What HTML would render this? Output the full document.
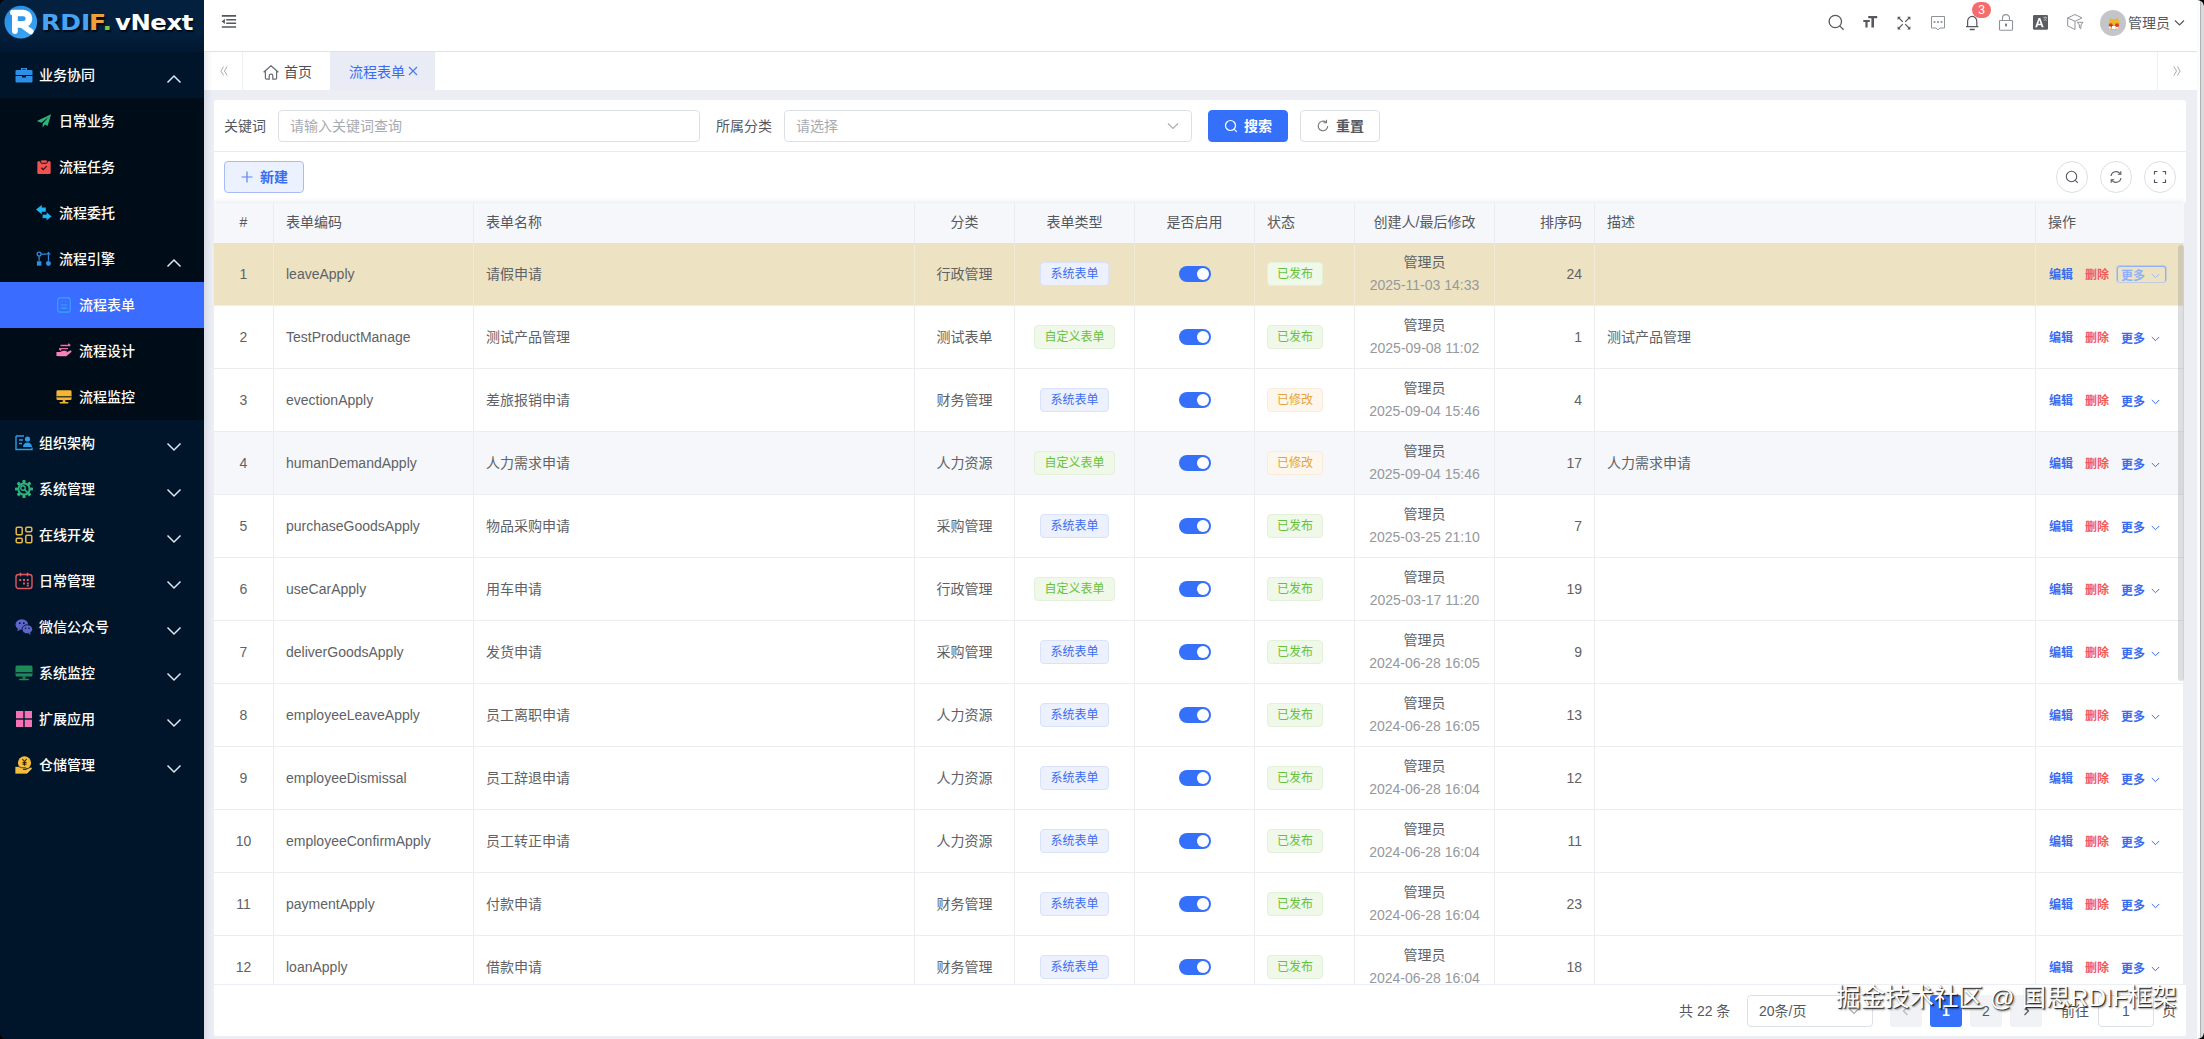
<!DOCTYPE html>
<html lang="zh-CN">
<head>
<meta charset="utf-8">
<title>流程表单</title>
<style>
*{box-sizing:border-box;margin:0;padding:0}
html,body{width:2204px;height:1039px;overflow:hidden;background:#eceef4;
  font-family:"Liberation Sans","Noto Sans CJK SC",sans-serif;font-size:14px;color:#606266}
body{position:relative}
svg{display:block;overflow:visible}
.abs{position:absolute}
/* ---------- sidebar ---------- */
#side{position:absolute;left:0;top:0;width:204px;height:1039px;background:#001529;color:#fff;overflow:hidden}
#logo{position:absolute;left:0;top:0;width:204px;height:52px;background:linear-gradient(180deg,#03213f 0,#03203e 62%,#021a34 88%,#011830 100%)}
#logo .lt{position:absolute;top:10px;font-family:"DejaVu Sans","Liberation Sans",sans-serif;font-size:21px;font-weight:700;line-height:26px;white-space:nowrap;transform:scaleX(1.19);transform-origin:0 0;text-shadow:1px 1.5px 1.5px rgba(0,0,0,.75)}
#subbg{position:absolute;left:0;top:98px;width:204px;height:322px;background:#000c17}
.mi{position:absolute;left:0;width:204px;height:46px;line-height:46px;font-size:14px;font-weight:500;color:#fff;white-space:nowrap}
.mi .ic{position:absolute;top:14px;width:18px;height:18px}
.mi .tx{position:absolute;top:0}
.mi .ar{position:absolute;left:166px;top:22px;width:16px;height:10px}
.act{background:#3a6cff}
/* ---------- header ---------- */
#head{position:absolute;left:204px;top:0;width:1992px;height:52px;background:#fff;border-bottom:1px solid #dfe2e8}
#head .hi{position:absolute;top:13px;width:18px;height:18px}
#tabs{position:absolute;left:204px;top:52px;width:1992px;height:38px;background:#fff}
.tab{position:absolute;top:0;height:38px;line-height:40px;font-size:14px;color:#4c4f54;white-space:nowrap}
/* ---------- card ---------- */
#card{position:absolute;left:214px;top:100px;width:1972px;height:936px;background:#fff;border-radius:3px;overflow:hidden}
.lbl{position:absolute;top:10px;height:32px;line-height:32px;font-size:14px;color:#55585e}
.inp{position:absolute;top:10px;height:32px;line-height:30px;border:1px solid #dcdfe6;border-radius:4px;background:#fff;font-size:14px;color:#a8abb2;padding-left:11px}
.btn{position:absolute;height:32px;line-height:30px;border-radius:4px;font-size:14px;font-weight:700;text-align:center;white-space:nowrap}
.cbtn{position:absolute;top:61px;width:32px;height:32px;border:1px solid #dcdfe6;border-radius:50%;background:#fff}
.cbtn svg{position:absolute;left:8px;top:8px;width:14px;height:14px}
/* table */
#th{position:absolute;left:0;top:103px;width:1970px;height:40px;background:#f5f7fa;box-shadow:0 -2px 4px rgba(200,205,220,.35)}
.hc{position:absolute;top:0;height:40px;line-height:39px;border-right:1px solid #e9ecf2;color:#55585e;font-size:14px;padding:0 12px;white-space:nowrap}
.row{position:absolute;left:0;width:1970px;height:63px;border-bottom:1px solid #ebedf1;background:#fff}
.row.hl{background:#ede3c2}
.row.st{background:#f5f7fa}
.c{position:absolute;top:0;height:63px;line-height:62px;border-right:1px solid #ebedf1;padding:0 12px;white-space:nowrap;color:#606266;font-size:14px}
.row.hl .c{border-right-color:#f1ead7}
.ctr{text-align:center}
.rgt{text-align:right}
.tag{display:inline-block;height:24px;line-height:22px;padding:0 9px;font-size:12px;border-radius:4px;border:1px solid;vertical-align:middle;position:relative;top:-1px}
.tb{color:#3a6cf0;background:#ecf1fd;border-color:#d8e2fb}
.tg{color:#67c23a;background:#eff8e9;border-color:#e2f2d9}
.to{color:#e6a23c;background:#fdf6ec;border-color:#faecd8}
.sw{position:absolute;left:44px;top:23px;width:32px;height:16px;border-radius:8px;background:#3570fa}
.sw i{position:absolute;right:2px;top:2px;width:12px;height:12px;border-radius:50%;background:#fff}
.two{line-height:23px;padding-top:8px}
.two span{display:block}
.two .d{color:#96989c}
.op{position:absolute;top:1px;font-size:12px;font-weight:700;line-height:63px}
.op.mo{top:2px}
.ob{color:#3a6cf0}
.or{color:#f05b5b}
/* pagination */
#pg{position:absolute;left:0;top:884px;width:1972px;height:52px;background:#fff;border-top:1px solid #ebeef5}
.pb{position:absolute;top:10px;width:32px;height:32px;line-height:32px;border-radius:3px;background:#f0f2f5;text-align:center;color:#55585e;font-size:14px}
/* right edge strip */
#edge{position:absolute;left:2197px;top:0;width:7px;height:1039px;background:linear-gradient(90deg,#fafbfb 0,#fcfdfd 3px,#b0b1b4 3px,#b4b5b8 4px,#d4d5d7 4.5px,#dadbdd 5px)}
#head,#tabs{width:1993px}
#wm{position:absolute;left:1836px;top:981px;font-size:24.5px;line-height:34px;color:#fff;white-space:nowrap;text-shadow:1px 1px 1px rgba(0,0,0,.85),2px 2px 2px rgba(0,0,0,.35);letter-spacing:0}
</style>
</head>
<body>
<div id="side">
<div id="logo"><svg class="abs" style="left:0;top:0;width:42px;height:44px" viewBox="0 0 42 44"><defs><linearGradient id="lg" x1="0" y1="0" x2=".6" y2="1"><stop offset="0" stop-color="#2389de"/><stop offset="1" stop-color="#3aa3f3"/></linearGradient></defs><circle cx="20.8" cy="22.1" r="16.3" fill="url(#lg)"/><g fill="none" stroke="#fff" stroke-linecap="round" stroke-linejoin="round"><path d="M14.9 12.7V31" stroke-width="5.8"/><path d="M15 13H23.3A5.7 5.7 0 0 1 23.3 24.4H18" stroke-width="6.6"/><path d="M21 24.5L30.8 31.6" stroke-width="5.5"/></g><circle cx="12.9" cy="12.6" r="2.9" fill="#fff"/></svg><div class="lt" style="left:40.5px;letter-spacing:0"><span style="color:#47a3f3">RDI</span><span style="color:#eda03c;margin-left:-1px">F</span><span style="color:#7ac943">.</span></div><div class="lt" style="left:114.5px;color:#fff;letter-spacing:-.4px;transform:scaleX(1.16)">vNext</div></div>
<div id="subbg"></div>
<div class="mi" style="top:52px"><svg class="ic" style="left:15px" viewBox="0 0 18 18"><path d="M6 2h6v2h4.5a1 1 0 0 1 1 1v4H.5V5a1 1 0 0 1 1-1H6zM7.5 3.3V4h3v-.7z" fill="#2e8fe6"/><path d="M.5 10h6.5v1.5h4V10h6.5v5.5a1 1 0 0 1-1 1h-15a1 1 0 0 1-1-1z" fill="#2e8fe6"/></svg><span class="tx" style="left:39px">业务协同</span><svg class="ar" viewBox="0 0 16 10"><path d="M1.5 8.5 L8 2 L14.5 8.5" fill="none" stroke="#dfe6f0" stroke-width="1.5"/></svg></div>
<div class="mi" style="top:98px"><svg class="ic" style="left:36px;top:15px;width:16px;height:16px" viewBox="0 0 18 18"><path d="M17 1.5 L1 9 L6 11 L14 4.5 L7.5 12 L7.5 16.5 L10 13 L13 14.5 Z" fill="#2fb37d"/></svg><span class="tx" style="left:59px">日常业务</span></div>
<div class="mi" style="top:144px"><svg class="ic" style="left:36px;top:15px;width:16px;height:16px" viewBox="0 0 18 18"><rect x="1.5" y="2.5" width="15" height="14.5" rx="1.5" fill="#f0524f"/><rect x="5.3" y="1" width="7.4" height="3.8" rx="1" fill="#f0524f" stroke="#000c17" stroke-width="1"/><path d="M6 9.8l2.2 2.2 3.8-4" fill="none" stroke="#3a1020" stroke-width="1.5"/></svg><span class="tx" style="left:59px">流程任务</span></div>
<div class="mi" style="top:190px"><svg class="ic" style="left:36px;top:15px;width:16px;height:16px" viewBox="0 0 18 18"><path d="M6.5 0 L0 5.2 L6.5 10.4 V7.6 H11 V2.8 H6.5Z" fill="#1fb3f5"/><path d="M11.5 7.6 L18 12.8 L11.5 18 V15.2 H7 V10.4 H11.5Z" fill="#1fb3f5" stroke="#000c17" stroke-width=".8"/></svg><span class="tx" style="left:59px">流程委托</span></div>
<div class="mi" style="top:236px"><svg class="ic" style="left:36px;top:15px;width:16px;height:16px" viewBox="0 0 18 18"><circle cx="3.5" cy="3.5" r="2.2" fill="none" stroke="#2e8fe6" stroke-width="1.4"/><path d="M6 3.5h5.5" stroke="#2e8fe6" stroke-width="1.4"/><path d="M14 .8l2.8 3.2h-5.6z" fill="#2e8fe6"/><path d="M14 4v7M3.5 6v5" stroke="#2e8fe6" stroke-width="1.4"/><rect x="1" y="11.5" width="5" height="5" fill="#2e8fe6"/><circle cx="14" cy="14" r="2.8" fill="#2e8fe6"/></svg><span class="tx" style="left:59px">流程引擎</span><svg class="ar" viewBox="0 0 16 10"><path d="M1.5 8.5 L8 2 L14.5 8.5" fill="none" stroke="#dfe6f0" stroke-width="1.5"/></svg></div>
<div class="mi act" style="top:282px"><svg class="ic" style="left:56px;top:15px;width:16px;height:16px" viewBox="0 0 18 18"><rect x="2" y="1" width="14" height="16" rx="2" fill="none" stroke="#35a7f5" stroke-width="1.2"/><path d="M5.5 9h7M5.5 12.5h7" stroke="#35a7f5" stroke-width="1.2"/><path d="M6.5 5h1M10.5 5h1" stroke="#35a7f5" stroke-width="1.2"/></svg><span class="tx" style="left:79px">流程表单</span></div>
<div class="mi" style="top:328px"><svg class="ic" style="left:56px;top:15px;width:16px;height:16px" viewBox="0 0 18 18"><path d="M5 2.8h11M16 2.8l-2.2-2M13.5 6.3H3.5M3.5 6.3l2.2 2" stroke="#f06aa8" stroke-width="1.6" fill="none"/><path d="M.5 10h4l3.2-1.2h3.6c1.1 0 1.1 1.7 0 1.7h-2.5 3.2l4-2c1.2-.5 2 1 1 1.8l-5.5 4.7H4.5L.5 14.5z" fill="#f684bb"/></svg><span class="tx" style="left:79px">流程设计</span></div>
<div class="mi" style="top:374px"><svg class="ic" style="left:56px;top:15px;width:16px;height:16px" viewBox="0 0 18 18"><rect x=".5" y="1.5" width="17" height="11" rx="1.5" fill="#f2b632"/><rect x=".5" y="8.2" width="17" height="1.2" fill="#000c17"/><rect x="7.5" y="12.5" width="3" height="2.2" fill="#f2b632"/><rect x="4" y="14.7" width="10" height="1.6" rx=".8" fill="#f2b632"/></svg><span class="tx" style="left:79px">流程监控</span></div>
<div class="mi" style="top:420px"><svg class="ic" style="left:15px" viewBox="0 0 18 18"><path d="M1 2h8M1 2v13.5h16v-2" fill="none" stroke="#2e9be6" stroke-width="1.4"/><path d="M4 6h4M4 9.5h3" stroke="#2e9be6" stroke-width="1.4"/><circle cx="12.5" cy="5" r="2.6" fill="#2e9be6"/><path d="M8 13c0-3 2-4.5 4.5-4.5s4.5 1.5 4.5 4.5z" fill="#2e9be6"/></svg><span class="tx" style="left:39px">组织架构</span><svg class="ar" viewBox="0 0 16 10"><path d="M1.5 1.5 L8 8 L14.5 1.5" fill="none" stroke="#dfe6f0" stroke-width="1.5"/></svg></div>
<div class="mi" style="top:466px"><svg class="ic" style="left:15px" viewBox="0 0 18 18"><g transform="translate(9 9)"><circle r="5.6" fill="none" stroke="#2fb37d" stroke-width="2"/><g fill="#2fb37d"><rect x="-1.6" y="-9" width="3.2" height="3" rx=".8"/><rect x="-1.6" y="6" width="3.2" height="3" rx=".8"/><rect x="-9" y="-1.6" width="3" height="3.2" rx=".8"/><rect x="6" y="-1.6" width="3" height="3.2" rx=".8"/><g transform="rotate(45)"><rect x="-1.6" y="-9" width="3.2" height="3" rx=".8"/><rect x="-1.6" y="6" width="3.2" height="3" rx=".8"/><rect x="-9" y="-1.6" width="3" height="3.2" rx=".8"/><rect x="6" y="-1.6" width="3" height="3.2" rx=".8"/></g></g><circle cx="-1" cy="-1" r="2.2" fill="none" stroke="#2fb37d" stroke-width="1.4"/><path d="M.5 .5L4.8 4.8" stroke="#2fb37d" stroke-width="1.7"/></g></svg><span class="tx" style="left:39px">系统管理</span><svg class="ar" viewBox="0 0 16 10"><path d="M1.5 1.5 L8 8 L14.5 1.5" fill="none" stroke="#dfe6f0" stroke-width="1.5"/></svg></div>
<div class="mi" style="top:512px"><svg class="ic" style="left:15px" viewBox="0 0 18 18"><g fill="none" stroke="#e7b84a" stroke-width="1.5"><rect x="1.2" y="1.2" width="6" height="7.5" rx="1.2"/><rect x="10.8" y="1.2" width="6" height="4.5" rx="1.2"/><rect x="1.2" y="12.3" width="6" height="4.5" rx="1.2"/><rect x="10.8" y="9.3" width="6" height="7.5" rx="1.2"/></g></svg><span class="tx" style="left:39px">在线开发</span><svg class="ar" viewBox="0 0 16 10"><path d="M1.5 1.5 L8 8 L14.5 1.5" fill="none" stroke="#dfe6f0" stroke-width="1.5"/></svg></div>
<div class="mi" style="top:558px"><svg class="ic" style="left:15px" viewBox="0 0 18 18"><rect x="1" y="2.5" width="16" height="14" rx="2.5" fill="none" stroke="#e2585c" stroke-width="1.4"/><path d="M5.5 .8v3.5M12.5 .8v3.5" stroke="#e2585c" stroke-width="1.6"/><g fill="#e2585c"><rect x="4.2" y="7" width="2" height="2"/><rect x="8" y="7" width="2" height="2"/><rect x="11.8" y="7" width="2" height="2"/><rect x="8" y="10.5" width="2" height="2"/><rect x="11.8" y="10.5" width="2" height="2"/><rect x="11.8" y="13" width="2" height="1.5"/></g></svg><span class="tx" style="left:39px">日常管理</span><svg class="ar" viewBox="0 0 16 10"><path d="M1.5 1.5 L8 8 L14.5 1.5" fill="none" stroke="#dfe6f0" stroke-width="1.5"/></svg></div>
<div class="mi" style="top:604px"><svg class="ic" style="left:15px" viewBox="0 0 18 18"><ellipse cx="6.8" cy="6.5" rx="6.3" ry="5.3" fill="#5f66c9"/><path d="M3 10.5l-.8 2.8 3-1.5z" fill="#5f66c9"/><ellipse cx="12.3" cy="11.3" rx="5.3" ry="4.5" fill="#5f66c9" stroke="#001529" stroke-width=".9"/><path d="M15 14.8l.8 2-2.5-1z" fill="#5f66c9"/><circle cx="4.8" cy="5.2" r=".9" fill="#001529"/><circle cx="8.8" cy="5.2" r=".9" fill="#001529"/><circle cx="10.6" cy="10.3" r=".8" fill="#001529"/><circle cx="14" cy="10.3" r=".8" fill="#001529"/></svg><span class="tx" style="left:39px">微信公众号</span><svg class="ar" viewBox="0 0 16 10"><path d="M1.5 1.5 L8 8 L14.5 1.5" fill="none" stroke="#dfe6f0" stroke-width="1.5"/></svg></div>
<div class="mi" style="top:650px"><svg class="ic" style="left:15px" viewBox="0 0 18 18"><rect x=".5" y="1.5" width="17" height="11" rx="1.5" fill="#1e8a5a"/><rect x=".5" y="8.2" width="17" height="1.2" fill="#001529"/><rect x="7.5" y="12.5" width="3" height="2.2" fill="#1e8a5a"/><rect x="4" y="14.7" width="10" height="1.6" rx=".8" fill="#1e8a5a"/></svg><span class="tx" style="left:39px">系统监控</span><svg class="ar" viewBox="0 0 16 10"><path d="M1.5 1.5 L8 8 L14.5 1.5" fill="none" stroke="#dfe6f0" stroke-width="1.5"/></svg></div>
<div class="mi" style="top:696px"><svg class="ic" style="left:15px" viewBox="0 0 18 18"><g fill="#f472b6"><rect x="1" y="1" width="7.3" height="7.3"/><rect x="9.7" y="1" width="7.3" height="7.3"/><rect x="1" y="9.7" width="7.3" height="7.3"/><rect x="9.7" y="9.7" width="7.3" height="7.3"/></g></svg><span class="tx" style="left:39px">扩展应用</span><svg class="ar" viewBox="0 0 16 10"><path d="M1.5 1.5 L8 8 L14.5 1.5" fill="none" stroke="#dfe6f0" stroke-width="1.5"/></svg></div>
<div class="mi" style="top:742px"><svg class="ic" style="left:15px" viewBox="0 0 18 18"><circle cx="9.5" cy="6.8" r="6.6" fill="#f5bd3d"/><path d="M0 10.5h3.5l3 1.2h4c1.2 0 1.2 1.6 0 1.6H8h3l4.5-2c1.2-.5 2.3.9 1.3 1.9L12 18H0z" fill="#f5bd3d" stroke="#001529" stroke-width=".7"/><path d="M7.3 3l2.2 2.6L11.7 3M9.5 5.6v4.2M7.5 6.6h4M7.5 8.2h4" stroke="#3a2400" stroke-width="1.1" fill="none"/></svg><span class="tx" style="left:39px">仓储管理</span><svg class="ar" viewBox="0 0 16 10"><path d="M1.5 1.5 L8 8 L14.5 1.5" fill="none" stroke="#dfe6f0" stroke-width="1.5"/></svg></div>
</div>
<div id="head">
<svg class="abs" style="left:17px;top:14px;width:16px;height:15px" viewBox="0 0 16 15"><path d="M.8 1.9H15.1M5.2 5.8H15.1M5.2 9.2H15.1M.8 13H15.1" stroke="#55585d" stroke-width="1.6" fill="none"/><path d="M3.9 4.7L.7 7.4 3.9 10.1z" fill="#55585d"/></svg><svg class="abs" style="left:1616px;top:0;width:280px;height:51px" viewBox="1820 0 280 51"><circle cx="1835.3" cy="21.5" r="6.2" fill="none" stroke="#55585d" stroke-width="1.3"/><path d="M1839.7 25.9L1843.6 29.8" stroke="#55585d" stroke-width="1.3"/><path d="M1868.2 15.9h9v2.3h-3.2v9.2h-2.6v-9.2h-3.2z" fill="#55585d"/><path d="M1863.3 20h6.5v2h-2.2v5.4h-2.2V22h-2.1z" fill="#55585d"/><g stroke="#55585d" stroke-width="1.2" fill="none"><path d="M1898.5 17.5l4.3 4.3M1909.5 17.5l-4.3 4.3M1898.5 28.5l4.3-4.3M1909.5 28.5l-4.3-4.3"/></g><g fill="#55585d"><path d="M1897.6 16.7h3.2l-3.2 3.2zM1910.4 16.7v3.2l-3.2-3.2zM1897.6 29.4v-3.2l3.2 3.2zM1910.4 29.4h-3.2l3.2-3.2z"/></g><path d="M1931.5 16.5h13v11.5h-4.5l-2 1.8-2-1.8h-4.5z" fill="none" stroke="#8f9298" stroke-width="1"/><g fill="#6d7076"><rect x="1933.6" y="21.3" width="1.8" height="1.4"/><rect x="1937.1" y="21.3" width="1.8" height="1.4"/><rect x="1940.6" y="21.3" width="1.8" height="1.4"/></g><path d="M1966 26.6h12.4M1967.6 26.6v-5a4.6 5.2 0 0 1 9.2 0v5" fill="none" stroke="#55585d" stroke-width="1.2"/><path d="M1970.3 29.4h3.8" stroke="#55585d" stroke-width="1.5" stroke-linecap="round"/><rect x="1999.5" y="20.5" width="13" height="9.7" rx=".6" fill="none" stroke="#8f9298" stroke-width="1.1"/><path d="M2002.5 20.5v-2.4a3.5 3.5 0 0 1 7 0v2.4" fill="none" stroke="#8f9298" stroke-width="1.1"/><rect x="2005.3" y="23.6" width="1.5" height="2.8" fill="#55585d"/><rect x="2033" y="15" width="15" height="14.7" rx="1.3" fill="#5b5d61"/><path d="M2035.2 27.3l3.3-9.3h1.8l3.3 9.3h-1.9l-.65-2h-3.3l-.65 2zM2038.25 23.8h2.3l-1.15-3.5z" fill="#fff"/><path d="M2043.5 17.4h3.6M2045.3 16.5v.9M2044 17.5c.4 1.7 1.6 2.7 3 3M2046.6 17.5c-.4 1.7-1.6 2.7-3 3" stroke="#d5d7db" stroke-width=".6" fill="none"/><g fill="none" stroke="#8f9298" stroke-width="1"><path d="M2075 14.5l-7.3 3.4v8l7.3 3.6M2075 14.5l7 3.4M2067.7 17.9l7.3 3.4 7-3.4M2075 21.3v8.2"/><path d="M2077.3 22.3h5.7l-2.1 2.7v3.6l-1.5-.9v-2.7z" fill="#fff"/></g></svg><div class="abs" style="left:1768px;top:2px;width:19px;height:16px;border-radius:8px;background:#f56c6c;color:#fff;font-size:12px;line-height:16px;text-align:center">3</div><div class="abs" style="left:1896px;top:10px;width:26px;height:26px;border-radius:50%;background:#c4c5ca;overflow:hidden"><svg viewBox="0 0 26 26" width="26" height="26"><path d="M9 8l2.5 1h4l2.5-1.5 1 4.5 1.5 2-3 .5-.5 5h-6.5l-2-5 1.5-4z" fill="#f0b429"/><circle cx="10.8" cy="15.2" r="2" fill="#d93a2b"/><circle cx="17" cy="15.2" r="2" fill="#d93a2b"/><rect x="12" y="16" width="3.6" height="3" fill="#fff"/><rect x="9" y="16.5" width="1.8" height="1.8" fill="#fff"/><rect x="16.2" y="16.8" width="1.8" height="1.8" fill="#fff"/></svg></div><div class="abs" style="left:1924px;top:1px;height:44px;line-height:44px;font-size:14px;color:#55585d">管理员</div><svg class="abs" style="left:1970px;top:19px;width:11px;height:8px" viewBox="0 0 11 8"><path d="M1 1.5l4.5 4.5L10 1.5" fill="none" stroke="#55585d" stroke-width="1.2"/></svg></div>
<div id="tabs">
<div class="abs" style="left:0;top:0;width:39px;height:38px;border-right:1px solid #eef0f4"></div><svg class="abs" style="left:15.5px;top:13.5px;width:8px;height:10px" viewBox="0 0 9 10" preserveAspectRatio="none"><path d="M4 .5L1 5l3 4.5M8 .5L5 5l3 4.5" fill="none" stroke="#a4a7ad" stroke-width="1"/></svg><svg class="abs" style="left:59px;top:12px;width:16px;height:17px" viewBox="0 0 16 17"><path d="M.6 8.3L8 1.7l7.4 6.6M2.4 6.9V14a1.2 1.2 0 0 0 1.2 1.2H6.2V12a1.8 1.8 0 0 1 3.6 0v3.2H12.4a1.2 1.2 0 0 0 1.2-1.2V6.9" fill="none" stroke="#6a6d73" stroke-width="1.25" stroke-linejoin="round"/></svg><div class="tab" style="left:80px">首页</div><div class="tab" style="left:126px;width:105px;background:#e9ecf5;color:#3a6cf0"><span style="position:absolute;left:19px">流程表单</span><svg class="abs" style="left:78px;top:14px;width:10px;height:10px" viewBox="0 0 10 10"><path d="M1 1l8 8M9 1l-8 8" stroke="#4a78f0" stroke-width="1.1"/></svg></div><div class="abs" style="left:1953px;top:0;width:39px;height:38px;border-left:1px solid #eef0f4"></div><svg class="abs" style="left:1968.5px;top:13.5px;width:8px;height:10px" viewBox="0 0 9 10" preserveAspectRatio="none"><path d="M1 .5L4 5 1 9.5M5 .5L8 5 5 9.5" fill="none" stroke="#a4a7ad" stroke-width="1"/></svg></div>
<div id="card">
<div class="lbl" style="left:10px">关键词</div><div class="inp" style="left:64px;width:422px">请输入关键词查询</div><div class="lbl" style="left:502px">所属分类</div><div class="inp" style="left:570px;width:408px">请选择<svg class="abs" style="left:382px;top:11px;width:12px;height:8px" viewBox="0 0 12 8"><path d="M1 1.5l5 5 5-5" fill="none" stroke="#a8abb2" stroke-width="1.1"/></svg></div><div class="btn" style="left:994px;top:10px;width:80px;background:#3570fa;color:#fff;border:1px solid #3570fa"><svg class="abs" style="left:15px;top:8px;width:14px;height:14px" viewBox="0 0 14 14"><circle cx="6.5" cy="6.5" r="5" fill="none" stroke="#fff" stroke-width="1.2"/><path d="M10.3 10.3l2.5 2.5" stroke="#fff" stroke-width="1.2"/></svg><span style="position:absolute;left:35px">搜索</span></div><div class="btn" style="left:1086px;top:10px;width:80px;background:#fff;color:#55585e;border:1px solid #dcdfe6"><svg class="abs" style="left:15px;top:8px;width:14px;height:14px" viewBox="0 0 14 14"><path d="M11.8 7a4.8 4.8 0 1 1-1.6-3.6" fill="none" stroke="#74777d" stroke-width="1.1"/><path d="M10.5 .8v3h-3" fill="none" stroke="#74777d" stroke-width="1.1"/></svg><span style="position:absolute;left:35px">重置</span></div><div class="abs" style="left:0;top:51px;width:1972px;height:1px;background:#e9ebf0"></div><div class="btn" style="left:10px;top:61px;width:80px;background:#ecf1fe;color:#3a6cf0;border:1px solid #a7bbf8"><svg class="abs" style="left:16px;top:9px;width:12px;height:12px" viewBox="0 0 12 12"><path d="M6 .5v11M.5 6h11" stroke="#5b84f5" stroke-width="1.2"/></svg><span style="position:absolute;left:35px">新建</span></div><div class="cbtn" style="left:1842px"><svg viewBox="0 0 14 14"><circle cx="6.5" cy="6.5" r="5.2" fill="none" stroke="#55585e" stroke-width="1.1"/><path d="M10.3 10.3l2.5 2.5" stroke="#55585e" stroke-width="1.1"/></svg></div><div class="cbtn" style="left:1886px"><svg viewBox="0 0 14 14"><path d="M2 6a5.2 5.2 0 0 1 9.5-2M12 8a5.2 5.2 0 0 1-9.5 2" fill="none" stroke="#55585e" stroke-width="1.1"/><path d="M11.8 1.2v3h-3M2.2 12.8v-3h3" fill="none" stroke="#55585e" stroke-width="1.1"/></svg></div><div class="cbtn" style="left:1930px"><svg viewBox="0 0 14 14"><path d="M1.5 4.5v-3h3M9.5 1.5h3v3M12.5 9.5v3h-3M4.5 12.5h-3v-3" fill="none" stroke="#55585e" stroke-width="1.2"/></svg></div><div class="abs" style="left:0;top:143px;width:1970px;height:742px;overflow:hidden">
<div class="row hl" style="top:0px"><div class="c ctr " style="left:0px;width:60px">1</div><div class="c  " style="left:60px;width:200px">leaveApply</div><div class="c  " style="left:260px;width:441px">请假申请</div><div class="c ctr " style="left:701px;width:100px">行政管理</div><div class="c ctr " style="left:801px;width:120px"><span class="tag tb">系统表单</span></div><div class="c ctr " style="left:921px;width:120px"><div class="sw"><i></i></div></div><div class="c  " style="left:1041px;width:100px"><span class="tag tg">已发布</span></div><div class="c ctr two" style="left:1141px;width:140px"><span>管理员</span><span class="d">2025-11-03 14:33</span></div><div class="c rgt " style="left:1281px;width:100px">24</div><div class="c  " style="left:1381px;width:441px"></div><div class="c  " style="left:1822px;width:148px"><span class="op ob" style="left:13px">编辑</span><span class="op or" style="left:49px">删除</span><div class="abs" style="left:81px;top:23px;width:49px;height:16px;border:1px solid #8fb0fb;border-bottom-color:transparent;border-radius:3px;box-shadow:0 0 0 1px rgba(143,176,251,.45)"></div><span class="op mo" style="left:85px;color:#8fb0fb">更多</span><svg class="abs" style="left:115px;top:30px;width:9px;height:6px" viewBox="0 0 9 6"><path d="M.8 1l3.7 3.7L8.2 1" fill="none" stroke="#9bb8fb" stroke-width="1"/></svg></div></div>
<div class="row" style="top:63px"><div class="c ctr " style="left:0px;width:60px">2</div><div class="c  " style="left:60px;width:200px">TestProductManage</div><div class="c  " style="left:260px;width:441px">测试产品管理</div><div class="c ctr " style="left:701px;width:100px">测试表单</div><div class="c ctr " style="left:801px;width:120px"><span class="tag tg">自定义表单</span></div><div class="c ctr " style="left:921px;width:120px"><div class="sw"><i></i></div></div><div class="c  " style="left:1041px;width:100px"><span class="tag tg">已发布</span></div><div class="c ctr two" style="left:1141px;width:140px"><span>管理员</span><span class="d">2025-09-08 11:02</span></div><div class="c rgt " style="left:1281px;width:100px">1</div><div class="c  " style="left:1381px;width:441px">测试产品管理</div><div class="c  " style="left:1822px;width:148px"><span class="op ob" style="left:13px">编辑</span><span class="op or" style="left:49px">删除</span><span class="op ob mo" style="left:85px">更多</span><svg class="abs" style="left:115px;top:30px;width:9px;height:6px" viewBox="0 0 9 6"><path d="M.8 1l3.7 3.7L8.2 1" fill="none" stroke="#3a6cf0" stroke-width="1"/></svg></div></div>
<div class="row" style="top:126px"><div class="c ctr " style="left:0px;width:60px">3</div><div class="c  " style="left:60px;width:200px">evectionApply</div><div class="c  " style="left:260px;width:441px">差旅报销申请</div><div class="c ctr " style="left:701px;width:100px">财务管理</div><div class="c ctr " style="left:801px;width:120px"><span class="tag tb">系统表单</span></div><div class="c ctr " style="left:921px;width:120px"><div class="sw"><i></i></div></div><div class="c  " style="left:1041px;width:100px"><span class="tag to">已修改</span></div><div class="c ctr two" style="left:1141px;width:140px"><span>管理员</span><span class="d">2025-09-04 15:46</span></div><div class="c rgt " style="left:1281px;width:100px">4</div><div class="c  " style="left:1381px;width:441px"></div><div class="c  " style="left:1822px;width:148px"><span class="op ob" style="left:13px">编辑</span><span class="op or" style="left:49px">删除</span><span class="op ob mo" style="left:85px">更多</span><svg class="abs" style="left:115px;top:30px;width:9px;height:6px" viewBox="0 0 9 6"><path d="M.8 1l3.7 3.7L8.2 1" fill="none" stroke="#3a6cf0" stroke-width="1"/></svg></div></div>
<div class="row st" style="top:189px"><div class="c ctr " style="left:0px;width:60px">4</div><div class="c  " style="left:60px;width:200px">humanDemandApply</div><div class="c  " style="left:260px;width:441px">人力需求申请</div><div class="c ctr " style="left:701px;width:100px">人力资源</div><div class="c ctr " style="left:801px;width:120px"><span class="tag tg">自定义表单</span></div><div class="c ctr " style="left:921px;width:120px"><div class="sw"><i></i></div></div><div class="c  " style="left:1041px;width:100px"><span class="tag to">已修改</span></div><div class="c ctr two" style="left:1141px;width:140px"><span>管理员</span><span class="d">2025-09-04 15:46</span></div><div class="c rgt " style="left:1281px;width:100px">17</div><div class="c  " style="left:1381px;width:441px">人力需求申请</div><div class="c  " style="left:1822px;width:148px"><span class="op ob" style="left:13px">编辑</span><span class="op or" style="left:49px">删除</span><span class="op ob mo" style="left:85px">更多</span><svg class="abs" style="left:115px;top:30px;width:9px;height:6px" viewBox="0 0 9 6"><path d="M.8 1l3.7 3.7L8.2 1" fill="none" stroke="#3a6cf0" stroke-width="1"/></svg></div></div>
<div class="row" style="top:252px"><div class="c ctr " style="left:0px;width:60px">5</div><div class="c  " style="left:60px;width:200px">purchaseGoodsApply</div><div class="c  " style="left:260px;width:441px">物品采购申请</div><div class="c ctr " style="left:701px;width:100px">采购管理</div><div class="c ctr " style="left:801px;width:120px"><span class="tag tb">系统表单</span></div><div class="c ctr " style="left:921px;width:120px"><div class="sw"><i></i></div></div><div class="c  " style="left:1041px;width:100px"><span class="tag tg">已发布</span></div><div class="c ctr two" style="left:1141px;width:140px"><span>管理员</span><span class="d">2025-03-25 21:10</span></div><div class="c rgt " style="left:1281px;width:100px">7</div><div class="c  " style="left:1381px;width:441px"></div><div class="c  " style="left:1822px;width:148px"><span class="op ob" style="left:13px">编辑</span><span class="op or" style="left:49px">删除</span><span class="op ob mo" style="left:85px">更多</span><svg class="abs" style="left:115px;top:30px;width:9px;height:6px" viewBox="0 0 9 6"><path d="M.8 1l3.7 3.7L8.2 1" fill="none" stroke="#3a6cf0" stroke-width="1"/></svg></div></div>
<div class="row" style="top:315px"><div class="c ctr " style="left:0px;width:60px">6</div><div class="c  " style="left:60px;width:200px">useCarApply</div><div class="c  " style="left:260px;width:441px">用车申请</div><div class="c ctr " style="left:701px;width:100px">行政管理</div><div class="c ctr " style="left:801px;width:120px"><span class="tag tg">自定义表单</span></div><div class="c ctr " style="left:921px;width:120px"><div class="sw"><i></i></div></div><div class="c  " style="left:1041px;width:100px"><span class="tag tg">已发布</span></div><div class="c ctr two" style="left:1141px;width:140px"><span>管理员</span><span class="d">2025-03-17 11:20</span></div><div class="c rgt " style="left:1281px;width:100px">19</div><div class="c  " style="left:1381px;width:441px"></div><div class="c  " style="left:1822px;width:148px"><span class="op ob" style="left:13px">编辑</span><span class="op or" style="left:49px">删除</span><span class="op ob mo" style="left:85px">更多</span><svg class="abs" style="left:115px;top:30px;width:9px;height:6px" viewBox="0 0 9 6"><path d="M.8 1l3.7 3.7L8.2 1" fill="none" stroke="#3a6cf0" stroke-width="1"/></svg></div></div>
<div class="row" style="top:378px"><div class="c ctr " style="left:0px;width:60px">7</div><div class="c  " style="left:60px;width:200px">deliverGoodsApply</div><div class="c  " style="left:260px;width:441px">发货申请</div><div class="c ctr " style="left:701px;width:100px">采购管理</div><div class="c ctr " style="left:801px;width:120px"><span class="tag tb">系统表单</span></div><div class="c ctr " style="left:921px;width:120px"><div class="sw"><i></i></div></div><div class="c  " style="left:1041px;width:100px"><span class="tag tg">已发布</span></div><div class="c ctr two" style="left:1141px;width:140px"><span>管理员</span><span class="d">2024-06-28 16:05</span></div><div class="c rgt " style="left:1281px;width:100px">9</div><div class="c  " style="left:1381px;width:441px"></div><div class="c  " style="left:1822px;width:148px"><span class="op ob" style="left:13px">编辑</span><span class="op or" style="left:49px">删除</span><span class="op ob mo" style="left:85px">更多</span><svg class="abs" style="left:115px;top:30px;width:9px;height:6px" viewBox="0 0 9 6"><path d="M.8 1l3.7 3.7L8.2 1" fill="none" stroke="#3a6cf0" stroke-width="1"/></svg></div></div>
<div class="row" style="top:441px"><div class="c ctr " style="left:0px;width:60px">8</div><div class="c  " style="left:60px;width:200px">employeeLeaveApply</div><div class="c  " style="left:260px;width:441px">员工离职申请</div><div class="c ctr " style="left:701px;width:100px">人力资源</div><div class="c ctr " style="left:801px;width:120px"><span class="tag tb">系统表单</span></div><div class="c ctr " style="left:921px;width:120px"><div class="sw"><i></i></div></div><div class="c  " style="left:1041px;width:100px"><span class="tag tg">已发布</span></div><div class="c ctr two" style="left:1141px;width:140px"><span>管理员</span><span class="d">2024-06-28 16:05</span></div><div class="c rgt " style="left:1281px;width:100px">13</div><div class="c  " style="left:1381px;width:441px"></div><div class="c  " style="left:1822px;width:148px"><span class="op ob" style="left:13px">编辑</span><span class="op or" style="left:49px">删除</span><span class="op ob mo" style="left:85px">更多</span><svg class="abs" style="left:115px;top:30px;width:9px;height:6px" viewBox="0 0 9 6"><path d="M.8 1l3.7 3.7L8.2 1" fill="none" stroke="#3a6cf0" stroke-width="1"/></svg></div></div>
<div class="row" style="top:504px"><div class="c ctr " style="left:0px;width:60px">9</div><div class="c  " style="left:60px;width:200px">employeeDismissal</div><div class="c  " style="left:260px;width:441px">员工辞退申请</div><div class="c ctr " style="left:701px;width:100px">人力资源</div><div class="c ctr " style="left:801px;width:120px"><span class="tag tb">系统表单</span></div><div class="c ctr " style="left:921px;width:120px"><div class="sw"><i></i></div></div><div class="c  " style="left:1041px;width:100px"><span class="tag tg">已发布</span></div><div class="c ctr two" style="left:1141px;width:140px"><span>管理员</span><span class="d">2024-06-28 16:04</span></div><div class="c rgt " style="left:1281px;width:100px">12</div><div class="c  " style="left:1381px;width:441px"></div><div class="c  " style="left:1822px;width:148px"><span class="op ob" style="left:13px">编辑</span><span class="op or" style="left:49px">删除</span><span class="op ob mo" style="left:85px">更多</span><svg class="abs" style="left:115px;top:30px;width:9px;height:6px" viewBox="0 0 9 6"><path d="M.8 1l3.7 3.7L8.2 1" fill="none" stroke="#3a6cf0" stroke-width="1"/></svg></div></div>
<div class="row" style="top:567px"><div class="c ctr " style="left:0px;width:60px">10</div><div class="c  " style="left:60px;width:200px">employeeConfirmApply</div><div class="c  " style="left:260px;width:441px">员工转正申请</div><div class="c ctr " style="left:701px;width:100px">人力资源</div><div class="c ctr " style="left:801px;width:120px"><span class="tag tb">系统表单</span></div><div class="c ctr " style="left:921px;width:120px"><div class="sw"><i></i></div></div><div class="c  " style="left:1041px;width:100px"><span class="tag tg">已发布</span></div><div class="c ctr two" style="left:1141px;width:140px"><span>管理员</span><span class="d">2024-06-28 16:04</span></div><div class="c rgt " style="left:1281px;width:100px">11</div><div class="c  " style="left:1381px;width:441px"></div><div class="c  " style="left:1822px;width:148px"><span class="op ob" style="left:13px">编辑</span><span class="op or" style="left:49px">删除</span><span class="op ob mo" style="left:85px">更多</span><svg class="abs" style="left:115px;top:30px;width:9px;height:6px" viewBox="0 0 9 6"><path d="M.8 1l3.7 3.7L8.2 1" fill="none" stroke="#3a6cf0" stroke-width="1"/></svg></div></div>
<div class="row" style="top:630px"><div class="c ctr " style="left:0px;width:60px">11</div><div class="c  " style="left:60px;width:200px">paymentApply</div><div class="c  " style="left:260px;width:441px">付款申请</div><div class="c ctr " style="left:701px;width:100px">财务管理</div><div class="c ctr " style="left:801px;width:120px"><span class="tag tb">系统表单</span></div><div class="c ctr " style="left:921px;width:120px"><div class="sw"><i></i></div></div><div class="c  " style="left:1041px;width:100px"><span class="tag tg">已发布</span></div><div class="c ctr two" style="left:1141px;width:140px"><span>管理员</span><span class="d">2024-06-28 16:04</span></div><div class="c rgt " style="left:1281px;width:100px">23</div><div class="c  " style="left:1381px;width:441px"></div><div class="c  " style="left:1822px;width:148px"><span class="op ob" style="left:13px">编辑</span><span class="op or" style="left:49px">删除</span><span class="op ob mo" style="left:85px">更多</span><svg class="abs" style="left:115px;top:30px;width:9px;height:6px" viewBox="0 0 9 6"><path d="M.8 1l3.7 3.7L8.2 1" fill="none" stroke="#3a6cf0" stroke-width="1"/></svg></div></div>
<div class="row" style="top:693px"><div class="c ctr " style="left:0px;width:60px">12</div><div class="c  " style="left:60px;width:200px">loanApply</div><div class="c  " style="left:260px;width:441px">借款申请</div><div class="c ctr " style="left:701px;width:100px">财务管理</div><div class="c ctr " style="left:801px;width:120px"><span class="tag tb">系统表单</span></div><div class="c ctr " style="left:921px;width:120px"><div class="sw"><i></i></div></div><div class="c  " style="left:1041px;width:100px"><span class="tag tg">已发布</span></div><div class="c ctr two" style="left:1141px;width:140px"><span>管理员</span><span class="d">2024-06-28 16:04</span></div><div class="c rgt " style="left:1281px;width:100px">18</div><div class="c  " style="left:1381px;width:441px"></div><div class="c  " style="left:1822px;width:148px"><span class="op ob" style="left:13px">编辑</span><span class="op or" style="left:49px">删除</span><span class="op ob mo" style="left:85px">更多</span><svg class="abs" style="left:115px;top:30px;width:9px;height:6px" viewBox="0 0 9 6"><path d="M.8 1l3.7 3.7L8.2 1" fill="none" stroke="#3a6cf0" stroke-width="1"/></svg></div></div>
<div class="abs" style="left:1964px;top:2px;width:6px;height:436px;border-radius:3px;background:rgba(144,147,153,.3)"></div></div>
<div id="th"><div class="hc ctr" style="left:0px;width:60px">#</div><div class="hc " style="left:60px;width:200px">表单编码</div><div class="hc " style="left:260px;width:441px">表单名称</div><div class="hc ctr" style="left:701px;width:100px">分类</div><div class="hc ctr" style="left:801px;width:120px">表单类型</div><div class="hc ctr" style="left:921px;width:120px">是否启用</div><div class="hc " style="left:1041px;width:100px">状态</div><div class="hc ctr" style="left:1141px;width:140px">创建人/最后修改</div><div class="hc rgt" style="left:1281px;width:100px">排序码</div><div class="hc " style="left:1381px;width:441px">描述</div><div class="hc " style="left:1822px;width:148px;border-right:0">操作</div></div>
<div id="pg"><div class="abs" style="left:1465px;top:10px;line-height:32px;color:#55585e">共 22 条</div><div class="inp" style="left:1533px;top:10px;width:126px;color:#55585e">20条/页<svg class="abs" style="left:100px;top:11px;width:12px;height:8px" viewBox="0 0 12 8"><path d="M1 1.5l5 5 5-5" fill="none" stroke="#a8abb2" stroke-width="1.1"/></svg></div><div class="pb" style="left:1676px"><svg class="abs" style="left:12px;top:11px;width:7px;height:10px" viewBox="0 0 7 10"><path d="M5.5 1L1.5 5l4 4" fill="none" stroke="#b4b7bd" stroke-width="1.2"/></svg></div><div class="pb" style="left:1716px;background:#3570fa;color:#fff;font-weight:700">1</div><div class="pb" style="left:1756px">2</div><div class="pb" style="left:1796px"><svg class="abs" style="left:13px;top:11px;width:7px;height:10px" viewBox="0 0 7 10"><path d="M1.5 1l4 4-4 4" fill="none" stroke="#55585e" stroke-width="1.2"/></svg></div><div class="abs" style="left:1847px;top:10px;line-height:32px;color:#55585e">前往</div><div class="inp" style="left:1884px;top:10px;width:56px;padding:0;text-align:center;color:#55585e">1</div><div class="abs" style="left:1948px;top:10px;line-height:32px;color:#55585e">页</div></div>
</div>
<div class="abs" style="left:2184px;top:203px;width:2px;height:782px;background:#eceef4"></div>
<div class="abs" style="left:204px;top:52px;width:9px;height:987px;background:linear-gradient(90deg,rgba(40,60,120,.10),rgba(40,60,120,.03) 55%,rgba(40,60,120,0))"></div>
<div id="edge"></div>
<div class="abs" style="left:2198px;top:0;width:6px;height:6px;background:radial-gradient(circle at 0 100%,rgba(0,0,0,0) 5.3px,#000 6.1px)"></div>
<div class="abs" style="left:2198px;top:1033px;width:6px;height:6px;background:radial-gradient(circle at 0 0,rgba(0,0,0,0) 5.3px,#000 6.1px)"></div>
<div class="abs" style="left:0;top:0;width:5px;height:5px;background:radial-gradient(circle at 100% 100%,rgba(0,0,0,0) 4.4px,#000 5.2px)"></div>
<div class="abs" style="left:0;top:1034px;width:5px;height:5px;background:radial-gradient(circle at 100% 0,rgba(0,0,0,0) 4.4px,#000 5.2px)"></div>
<div id="wm">掘金技术社区 @ 国思RDIF框架</div>
</body>
</html>
